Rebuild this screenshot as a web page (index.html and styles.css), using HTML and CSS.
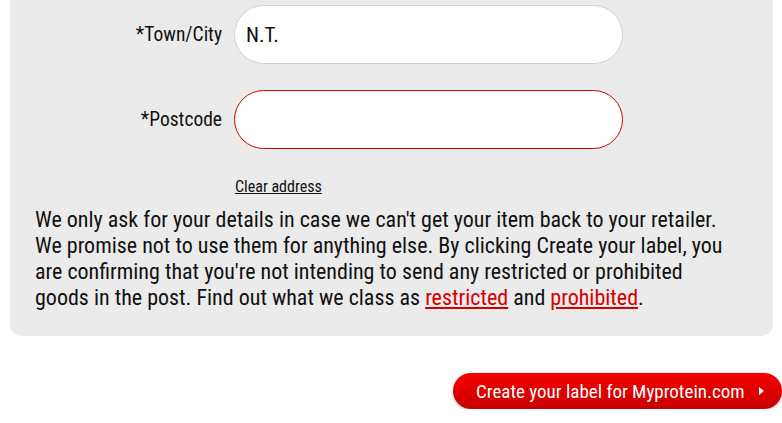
FILE: index.html
```html
<!DOCTYPE html>
<html>
<head>
<meta charset="utf-8">
<link rel="stylesheet" href="styles.css">
</head>
<body>
<div class="panel">
  <div class="row">
    <label class="lbl">*Town/City</label>
    <div class="field">N.T.</div>
  </div>
  <div class="row">
    <label class="lbl">*Postcode</label>
    <div class="field error"></div>
  </div>
  <div class="clear-row"><a class="clear" href="#">Clear address</a></div>
  <p class="info">We only ask for your details in case we can't get your item back to your retailer. We promise not to use them for anything else. By clicking Create your label, you are confirming that you're not intending to send any restricted or prohibited goods in the post. Find out what we class as <a class="red" href="#">restricted</a> and <a class="red" href="#">prohibited</a>.</p>
</div>
<div class="actions">
  <button class="btn">Create your label for Myprotein.com <span class="arrow"></span></button>
</div>
</body>
</html>
```
FILE: styles.css
```css
html, body { margin: 0; padding: 0; background: #fff; }
body { font-family: Roboto, "DejaVu Sans Condensed", sans-serif; font-stretch: condensed; color: #111; }
.panel {
  margin-left: 10px;
  width: 763px;
  background: #ebebeb;
  border-radius: 0 0 12px 12px;
  padding: 5px 0 25px 0;
  box-sizing: border-box;
}
.row { display: flex; align-items: center; margin-bottom: 26px; }
.lbl { width: 212px; text-align: right; font-size: 19.5px; padding-right: 12px; }
.field {
  width: 389px; height: 59px; box-sizing: border-box;
  background: #fff; border: 1px solid #cfcfcf; border-radius: 30px;
  font-size: 21px; padding-left: 11px; display: flex; align-items: center;
}
.field.error { border-color: #d40000; }
.clear-row { padding: 2px 0 0 225px; line-height: 20px; }
.clear { font-size: 16px; color: #111; }
.info { margin: 10px 0 0 25px; font-size: 22px; line-height: 26px; width: 696px; }
.red { color: #d40000; }
.actions { display: flex; justify-content: flex-end; margin-top: 37px; }
.btn {
  height: 36px; width: 329px; border: none; border-radius: 18px;
  background: linear-gradient(#f50000, #c80000);
  color: #fff; font-family: inherit; font-stretch: condensed; font-size: 19px; white-space: nowrap;
  box-shadow: 0 1px 3px rgba(0,0,0,0.3);
  display: flex; align-items: center; padding-left: 23px;
}
.arrow { margin-left: 14px; width: 0; height: 0; border-left: 5px solid #fff; border-top: 4px solid transparent; border-bottom: 4px solid transparent; }
```
